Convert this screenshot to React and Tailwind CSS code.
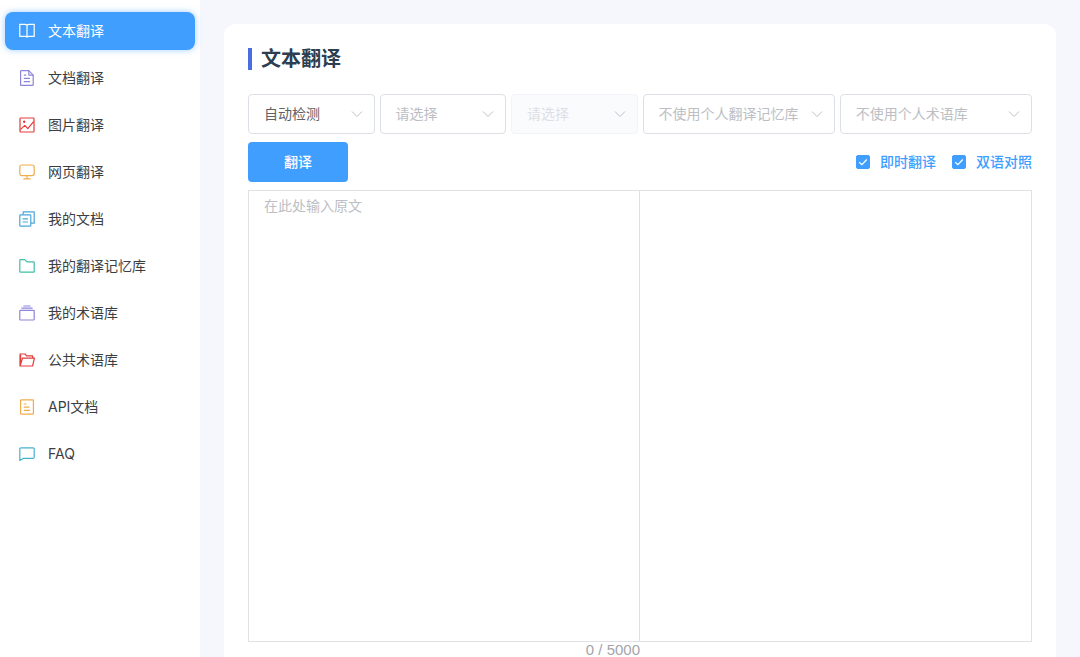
import React, { useState } from "react";

const NAV = [
  { label: "文本翻译", icon: "book", color: "text-white" },
  { label: "文档翻译", icon: "doc", color: "text-[#8d84dc]" },
  { label: "图片翻译", icon: "image", color: "text-[#e23c39]" },
  { label: "网页翻译", icon: "monitor", color: "text-[#f0ad4a]" },
  { label: "我的文档", icon: "copy", color: "text-[#4ba6d8]" },
  { label: "我的翻译记忆库", icon: "folder", color: "text-[#3fbfa8]" },
  { label: "我的术语库", icon: "stack", color: "text-[#8d84dc]" },
  { label: "公共术语库", icon: "folderOpen", color: "text-[#e23c39]" },
  { label: "API文档", icon: "list", color: "text-[#f0ad4a]" },
  { label: "FAQ", icon: "chat", color: "text-[#45b2cf]" },
];

const SHAPES = {
  book: <path d="M8 2.4Q7.2 1.4 6 1.4H.8v12H6.6Q7.4 13.4 8 14.2Q8.6 13.4 9.4 13.4h5.8v-12H10Q8.8 1.4 8 2.4zv11.8" />,
  doc: (
    <>
      <path d="M2.2.7h7.6l4.4 4.4v9.6q0 .6-.6.6H2.2q-.6 0-.6-.6V1.3q0-.6.6-.6z" />
      <path d="M9.8.7v4.4h4.4M4.8 5.2h2.4M4.8 8.4h6.2M4.8 11.6h6.2" />
    </>
  ),
  image: (
    <>
      <rect x="1" y="1" width="14" height="14" rx=".8" />
      <path d="M1.4 12.6l4.4-4.2 3 3.2L14.6 4.6" />
      <circle cx="5.2" cy="4.8" r=".6" fill="currentColor" />
    </>
  ),
  monitor: (
    <>
      <rect x=".8" y="1" width="14.4" height="10.6" rx="2" />
      <path d="M8 11.6v3.2M4.4 14.8h7.2" />
    </>
  ),
  copy: (
    <>
      <path d="M4.2 3.6V.8h11v11.4H12" />
      <rect x=".8" y="3.8" width="11" height="11.4" rx=".8" />
      <path d="M3.6 7.8h5.4M3.6 11h5.4" />
    </>
  ),
  folder: <path d="M1.4 1.6h4.4l2.2 2.2h6.6q.6 0 .6.6v9.2q0 .6-.6.6H1.4q-.6 0-.6-.6V2.2q0-.6.6-.6z" />,
  stack: (
    <>
      <rect x=".8" y="5.4" width="14.4" height="9.6" rx=".8" />
      <path d="M2.4 3.2h11.2M4.4 1h7.2" />
    </>
  ),
  folderOpen: (
    <>
      <path d="M1 14V2h5l1.6 1.8H13.6v2.4M1 14L3.4 6.2h12L13.6 14z" />
      <path d="M1.6 12V2.8" />
    </>
  ),
  list: (
    <>
      <rect x="1.6" y=".8" width="12.8" height="14.4" rx=".8" />
      <path d="M4.8 5h2.6M4.8 8.2h5.6M4.8 11.4h6.4" />
    </>
  ),
  chat: <path d="M2 1.8h12q1.2 0 1.2 1.2v8.2q0 1.2-1.2 1.2H4L.8 14.4V3q0-1.2 1.2-1.2z" />,
};

function Icon({ name, className }) {
  return (
    <svg
      viewBox="0 0 16 16"
      className={`size-4 shrink-0 ${className}`}
      fill="none"
      stroke="currentColor"
      strokeWidth="1.2"
      strokeLinejoin="round"
      aria-hidden="true"
    >
      {SHAPES[name]}
    </svg>
  );
}

function Dropdown({ label, value, tone = "text-[#bcbec4]", disabled = false }) {
  return (
    <div className="relative min-w-0">
      <select
        aria-label={label}
        disabled={disabled}
        className={`h-10 w-full appearance-none rounded border pr-8 pl-[15px] text-sm opacity-100 outline-none ${
          disabled ? "border-[#f2f4f8] bg-[#fafbfd]" : "border-[#dcdfe6] bg-white"
        } ${tone}`}
      >
        <option>{value}</option>
      </select>
      <svg
        viewBox="0 0 12 12"
        className="pointer-events-none absolute top-3.5 right-3 size-3 text-[#bcc0c8]"
        fill="none"
        stroke="currentColor"
        aria-hidden="true"
      >
        <path d="M1 3.5l5 5 5-5" />
      </svg>
    </div>
  );
}

function Toggle({ label }) {
  const [on, setOn] = useState(true);
  return (
    <label className="flex items-center gap-2.5 text-sm font-medium text-[#409eff]">
      <span className="relative flex">
        <input
          type="checkbox"
          checked={on}
          onChange={() => setOn(!on)}
          className="peer size-3.5 appearance-none rounded-xs border border-[#409eff] checked:bg-[#409eff]"
        />
        <svg
          viewBox="0 0 14 14"
          className="pointer-events-none absolute inset-0 hidden size-3.5 text-white peer-checked:block"
          fill="none"
          stroke="currentColor"
          strokeWidth="1.2"
          aria-hidden="true"
        >
          <path d="M3.3 7.2l2.6 2.5 4.9-5.2" />
        </svg>
      </span>
      {label}
    </label>
  );
}

export default function App() {
  const [text, setText] = useState("");
  return (
    <div className="flex min-h-screen bg-[#f5f7fd] font-[Inter,'Noto_Sans_CJK_SC',sans-serif] text-[#3c3e42]">
      <aside className="w-[200px] shrink-0 bg-white px-[5px] pt-3">
        <nav className="flex flex-col gap-[9px]">
          {NAV.map((item, i) => (
            <a
              key={item.label}
              href="#"
              aria-current={i === 0 ? "page" : undefined}
              className={`flex h-[38px] items-center gap-[13px] rounded-lg pl-3.5 text-sm ${
                i === 0 ? "bg-[#409eff] text-white shadow-[0_0_6px_#409eff80]" : ""
              }`}
            >
              <Icon name={item.icon} className={item.color} />
              {item.label}
            </a>
          ))}
        </nav>
      </aside>

      <main className="flex min-w-0 flex-1 flex-col px-6 pt-6">
        <section className="flex flex-1 flex-col rounded-t-xl bg-white px-6 pt-5">
          <h1 className="flex h-[30px] items-center gap-[9px] text-xl font-bold text-[#2c3e50]">
            <span className="h-[22px] w-1 bg-[#4a6ee0]" />
            文本翻译
          </h1>

          <div className="mt-5 grid grid-cols-[127fr_127fr_127fr_193fr_193fr] gap-[5px]">
            <Dropdown label="源语言" value="自动检测" tone="text-[#606266]" />
            <Dropdown label="目标语言" value="请选择" />
            <Dropdown label="领域" value="请选择" tone="text-[#dddfe5]" disabled />
            <Dropdown label="翻译记忆库" value="不使用个人翻译记忆库" />
            <Dropdown label="术语库" value="不使用个人术语库" />
          </div>

          <div className="mt-2 flex items-center justify-between">
            <button type="button" className="h-10 w-[100px] rounded bg-[#409eff] text-sm font-medium text-white">
              翻译
            </button>
            <div className="flex gap-4">
              <Toggle label="即时翻译" />
              <Toggle label="双语对照" />
            </div>
          </div>

          <div className="mt-2 grid flex-1 grid-cols-2 border border-[#e0e1e4]">
            <textarea
              aria-label="原文"
              placeholder="在此处输入原文"
              maxLength={5000}
              value={text}
              onChange={(e) => setText(e.target.value)}
              className="resize-none border-r border-[#dcdfe6] px-[15px] py-[5px] text-sm outline-none placeholder:text-[#bcbec4]"
            />
            <textarea aria-label="译文" readOnly className="resize-none px-[15px] py-[5px] text-sm outline-none" />
          </div>
          <div className="grid grid-cols-2">
            <output className="text-right font-['Liberation_Sans',sans-serif] text-[15px] leading-[15px] text-[#a3a5aa]">
              {text.length} / 5000
            </output>
          </div>
        </section>
      </main>
    </div>
  );
}
